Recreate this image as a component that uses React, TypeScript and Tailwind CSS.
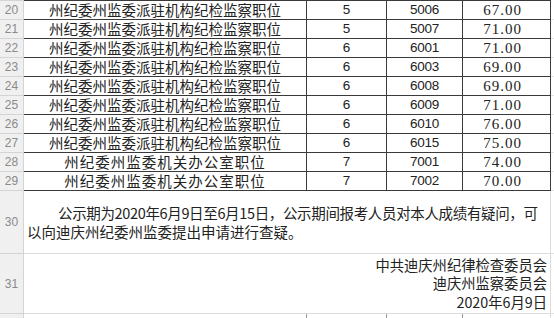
const rows = [
  { n: 20, name: "州纪委州监委派驻机构纪检监察职位", g: "5", code: "5006", score: "67.00" },
  { n: 21, name: "州纪委州监委派驻机构纪检监察职位", g: "5", code: "5007", score: "71.00" },
  { n: 22, name: "州纪委州监委派驻机构纪检监察职位", g: "6", code: "6001", score: "71.00" },
  { n: 23, name: "州纪委州监委派驻机构纪检监察职位", g: "6", code: "6003", score: "69.00" },
  { n: 24, name: "州纪委州监委派驻机构纪检监察职位", g: "6", code: "6008", score: "69.00" },
  { n: 25, name: "州纪委州监委派驻机构纪检监察职位", g: "6", code: "6009", score: "71.00" },
  { n: 26, name: "州纪委州监委派驻机构纪检监察职位", g: "6", code: "6010", score: "76.00" },
  { n: 27, name: "州纪委州监委派驻机构纪检监察职位", g: "6", code: "6015", score: "75.00" },
  { n: 28, name: "州纪委州监委机关办公室职位", g: "7", code: "7001", score: "74.00", wide: true },
  { n: 29, name: "州纪委州监委机关办公室职位", g: "7", code: "7002", score: "70.00", wide: true },
];

const cjk = "font-['Noto_Sans_CJK_SC',sans-serif]";

function RowHead({ n, h }: { n?: number; h: string }) {
  return (
    <div
      className={`${h} w-[24px] shrink-0 flex items-center justify-center bg-[#f0f0f0] border-r border-b border-[#d4d4d4] text-[12px] text-[#8a8a8a] font-['Liberation_Sans',sans-serif]`}
    >
      {n}
    </div>
  );
}

export default function App() {
  return (
    <div className="w-[554px] h-[318px] overflow-hidden bg-white text-[#222]">
      {/* top line belongs to row 19 */}
      <div className="flex h-[1px]">
        <div className="w-[24px] bg-[#d4d4d4]" />
        <div className="w-[527px] bg-[#3a3a3a]" />
      </div>

      {rows.map((r) => (
        <div key={r.n} className="flex h-[19px]">
          <RowHead n={r.n} h="h-[19px]" />
          <div
            className={`w-[283px] h-[19px] flex items-center justify-center border-r border-b border-[#3a3a3a] text-[14.5px] leading-none ${cjk} ${
              r.wide ? "tracking-[1px]" : ""
            }`}
          >
            {r.name}
          </div>
          <div className="w-[80px] h-[19px] flex items-center justify-center border-r border-b border-[#3a3a3a] text-[13.5px] font-['Liberation_Sans',sans-serif]">
            {r.g}
          </div>
          <div className="w-[76px] h-[19px] flex items-center justify-center border-r border-b border-[#3a3a3a] text-[13.5px] tracking-[-0.3px] font-['Liberation_Sans',sans-serif]">
            {r.code}
          </div>
          <div className="w-[88px] h-[19px] flex items-center justify-center pr-[8px] border-r border-b border-[#3a3a3a] text-[15px] tracking-[1px] font-['Liberation_Serif',serif]">
            {r.score}
          </div>
          <div className="flex-1 h-[19px] border-b border-[#e2e2e2]" />
        </div>
      ))}

      {/* row 30 */}
      <div className="flex h-[63px]">
        <RowHead n={30} h="h-[63px]" />
        <div
          className={`w-[527px] h-[63px] flex flex-col justify-center pl-[3px] border-r border-b border-[#dcdcdc] text-[14.5px] leading-[19px] ${cjk}`}
        >
          <div className="pl-[31px] whitespace-nowrap tracking-[-0.35px]">
            公示期为2020年6月9日至6月15日，公示期间报考人员对本人成绩有疑问，可
          </div>
          <div className="whitespace-nowrap">以向迪庆州纪委州监委提出申请进行查疑。</div>
        </div>
        <div className="flex-1 h-[63px] border-b border-[#e2e2e2]" />
      </div>

      {/* row 31 */}
      <div className="flex h-[60px]">
        <RowHead n={31} h="h-[60px]" />
        <div
          className={`w-[527px] h-[60px] flex flex-col justify-center items-end pr-[3px] border-r border-b border-[#dcdcdc] text-[14.3px] leading-[18.5px] ${cjk}`}
        >
          <div>中共迪庆州纪律检查委员会</div>
          <div>迪庆州监察委员会</div>
          <div>2020年6月9日</div>
        </div>
        <div className="flex-1 h-[60px] border-b border-[#e2e2e2]" />
      </div>

      {/* row 32 */}
      <div className="flex h-[19px]">
        <RowHead h="h-[19px]" />
        <div className="w-[283px] h-[19px] border-r border-[#9a9a9a]" />
        <div className="w-[80px] h-[19px] border-r border-[#9a9a9a]" />
        <div className="w-[76px] h-[19px] border-r border-[#9a9a9a]" />
        <div className="w-[88px] h-[19px] border-r border-[#dcdcdc]" />
      </div>
    </div>
  );
}
